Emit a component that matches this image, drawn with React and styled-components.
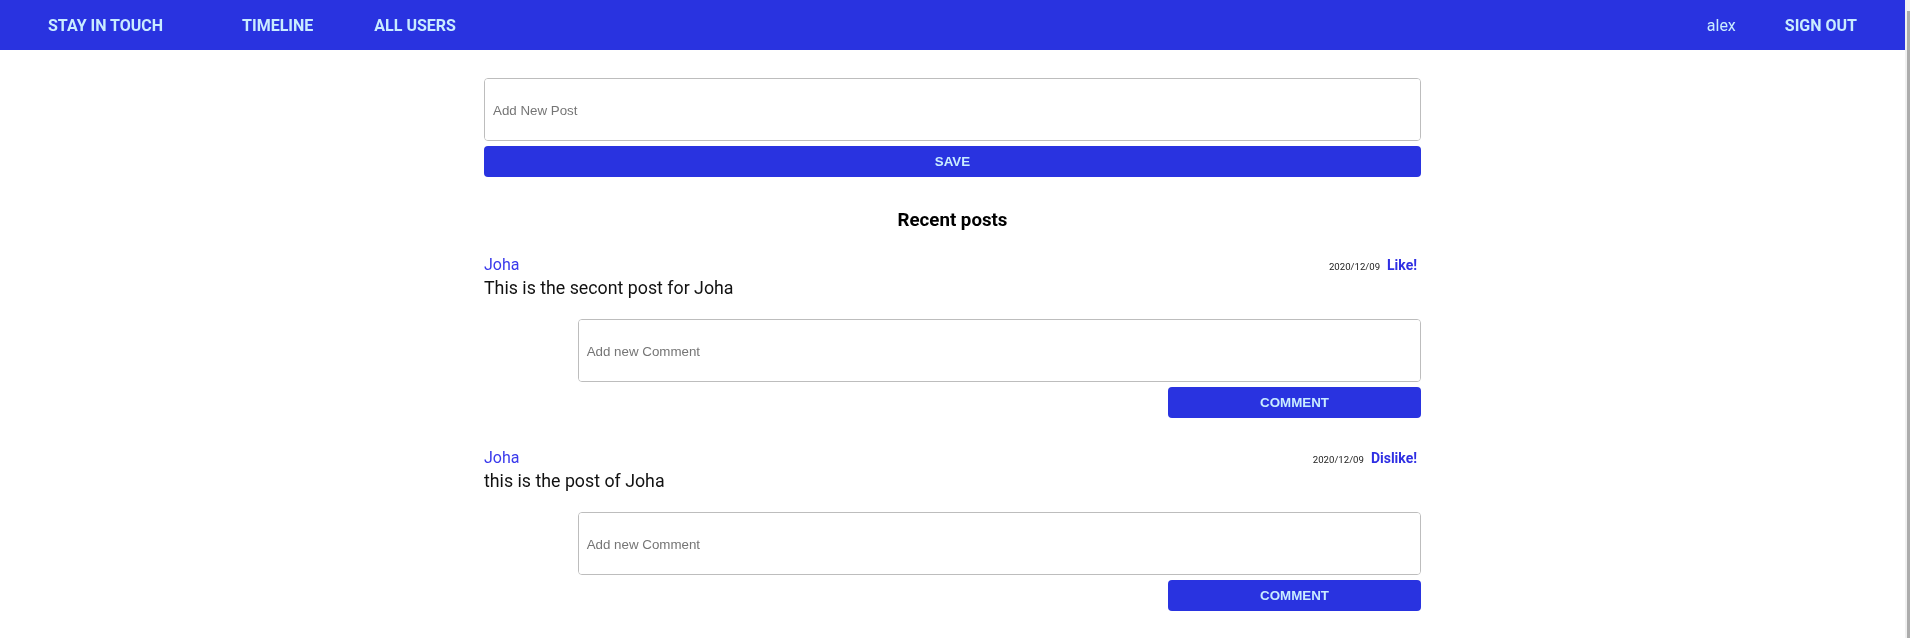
import React from "react";
import styled, { createGlobalStyle } from "styled-components";

const GlobalStyle = createGlobalStyle`
  html, body {
    margin: 0;
    padding: 0;
    background: #ffffff;
  }
  body {
    font-family: Roboto, "Liberation Sans", Arial, sans-serif;
    color: #111111;
  }
`;

const BLUE = "#2933e0";
const LIGHT = "#c9ecff";

const Shell = styled.div`
  display: flex;
  min-height: 100vh;
`;

const Page = styled.div`
  flex: 1;
  min-width: 0;
`;

const ScrollRail = styled.div`
  width: 5px;
  flex: none;
  background: #f1f1f1;
  display: flex;
  flex-direction: column;
  padding-top: 11px;
  box-sizing: border-box;
`;

const ScrollThumb = styled.div`
  flex: 1;
  margin-left: 2px;
  background: #acacac;
`;

const Nav = styled.nav`
  height: 50px;
  background: ${BLUE};
  display: flex;
  align-items: center;
  justify-content: space-between;
  padding: 0 48px;
`;

const NavGroup = styled.div`
  display: flex;
  align-items: center;
  gap: ${(p) => p.$gap}px;
`;

const NavLink = styled.a`
  font-family: Roboto, sans-serif;
  font-weight: ${(p) => (p.$plain ? 400 : 700)};
  font-size: 16px;
  text-transform: ${(p) => (p.$plain ? "none" : "uppercase")};
  color: ${LIGHT};
  text-decoration: none;
  margin-right: ${(p) => p.$after || 0}px;
  cursor: pointer;
`;

const Main = styled.main`
  width: 937px;
  margin: 0 auto;
  padding: 28px 0 48px;
`;

const Field = styled.textarea`
  display: block;
  width: 100%;
  height: 63px;
  box-sizing: border-box;
  border: 1px solid #bdbdbd;
  border-radius: 4px;
  padding: 1px 8px 0;
  resize: none;
  font-family: "Liberation Sans", Arial, sans-serif;
  font-size: 13.33px;
  line-height: 61px;
  color: #222;
  outline: none;
  &::placeholder {
    color: #757575;
  }
`;

const Button = styled.button`
  display: block;
  width: ${(p) => p.$width || "100%"};
  margin: 5px 0 0 auto;
  height: 31px;
  border: none;
  border-radius: 4px;
  background: ${BLUE};
  color: ${LIGHT};
  font-family: "Liberation Sans", Arial, sans-serif;
  font-weight: 700;
  font-size: 13.33px;
  text-transform: uppercase;
  cursor: pointer;
`;

const Heading = styled.h2`
  margin: 31px 0 21px;
  font-family: Roboto, sans-serif;
  font-weight: 700;
  font-size: 18.7px;
  line-height: 24px;
  text-align: center;
  color: #000;
`;

const Post = styled.article`
  & + & {
    margin-top: 28px;
  }
`;

const PostHeader = styled.div`
  display: flex;
  align-items: baseline;
  justify-content: space-between;
  height: 23px;
  padding-right: 4px;
`;

const Author = styled.a`
  font-size: 16px;
  line-height: 23px;
  color: #3a3aec;
  text-decoration: none;
`;

const Meta = styled.div`
  display: flex;
  align-items: baseline;
  gap: 7px;
`;

const PostDate = styled.span`
  font-size: 9.6px;
  color: #222;
`;

const Reaction = styled.a`
  font-size: 14px;
  font-weight: 700;
  color: #2f2fe3;
  text-decoration: none;
  cursor: pointer;
`;

const PostBody = styled.p`
  margin: 0;
  font-size: 17.8px;
  line-height: 24px;
  color: #111;
`;

const CommentForm = styled.form`
  margin: 19px 0 0 10%;
`;

const posts = [
  { id: 2, author: "Joha", date: "2020/12/09", text: "This is the secont post for Joha", reaction: "Like!" },
  { id: 1, author: "Joha", date: "2020/12/09", text: "this is the post of Joha", reaction: "Dislike!" },
];

export default function App() {
  return (
    <>
      <GlobalStyle />
      <Shell>
        <Page>
          <Nav>
            <NavGroup $gap={61}>
              <NavLink $after={18}>Stay in touch</NavLink>
              <NavLink>Timeline</NavLink>
              <NavLink>All users</NavLink>
            </NavGroup>
            <NavGroup $gap={49}>
              <NavLink $plain>alex</NavLink>
              <NavLink>Sign out</NavLink>
            </NavGroup>
          </Nav>
          <Main>
            <form onSubmit={(e) => e.preventDefault()}>
              <Field placeholder="Add New Post" />
              <Button type="submit">Save</Button>
            </form>
            <Heading>Recent posts</Heading>
            {posts.map((p) => (
              <Post key={p.id}>
                <PostHeader>
                  <Author>{p.author}</Author>
                  <Meta>
                    <PostDate>{p.date}</PostDate>
                    <Reaction>{p.reaction}</Reaction>
                  </Meta>
                </PostHeader>
                <PostBody>{p.text}</PostBody>
                <CommentForm onSubmit={(e) => e.preventDefault()}>
                  <Field placeholder="Add new Comment" />
                  <Button type="submit" $width="30%">Comment</Button>
                </CommentForm>
              </Post>
            ))}
          </Main>
        </Page>
        <ScrollRail aria-hidden="true">
          <ScrollThumb />
        </ScrollRail>
      </Shell>
    </>
  );
}
